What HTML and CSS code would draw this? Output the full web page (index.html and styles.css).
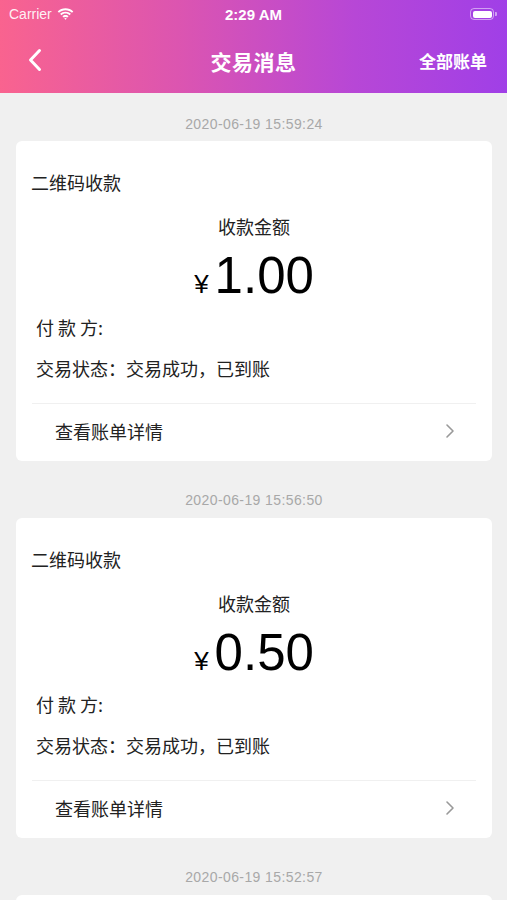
FILE: index.html
```html
<!DOCTYPE html>
<html lang="zh">
<head>
<meta charset="utf-8">
<link rel="stylesheet" href="styles.css">
</head>
<body>
<header class="header">
  <div class="status-bar">
    <div class="carrier">Carrier
      <svg class="wifi" width="17" height="12" viewBox="0 0 17 12"><path d="M8.5 2.2c2.5 0 4.8 1 6.5 2.6l1.3-1.4C14.2 1.4 11.5.3 8.5.3S2.8 1.4.7 3.4L2 4.8c1.7-1.6 4-2.6 6.5-2.6z" fill="#fff"/><path d="M8.5 5.6c1.6 0 3 .6 4.1 1.6l1.3-1.4C12.5 4.5 10.6 3.7 8.5 3.7S4.5 4.5 3.1 5.8l1.3 1.4c1.1-1 2.5-1.6 4.1-1.6z" fill="#fff"/><path d="M8.5 8.9c.7 0 1.3.3 1.8.7l1.3-1.4c-.8-.7-1.900-1.2-3.1-1.2s-2.3.5-3.1 1.2l1.3 1.4c.5-.4 1.1-.7 1.8-.7zM8.5 11.8l1.3-1.4c-.3-.3-.8-.5-1.3-.5s-1 .2-1.3.5z" fill="#fff"/></svg>
    </div>
    <div class="time">2:29 AM</div>
    <div class="battery"><span class="battery-body"><span class="battery-fill"></span></span><span class="battery-tip"></span></div>
  </div>
  <div class="nav">
    <svg class="back" width="14" height="24" viewBox="0 0 14 24"><path d="M11.5 2.5 2.5 12l9 9.5" fill="none" stroke="#fff" stroke-width="3" stroke-linecap="round" stroke-linejoin="round"/></svg>
    <div class="title">交易消息</div>
    <div class="nav-right">全部账单</div>
  </div>
</header>
<main class="list">
  <section class="entry">
    <div class="stamp">2020-06-19 15:59:24</div>
    <div class="card">
      <div class="card-type">二维码收款</div>
      <div class="amount-label">收款金额</div>
      <div class="amount"><span class="yen">¥</span><span class="num">1.00</span></div>
      <div class="field payer">付 款 方:</div>
      <div class="field status">交易状态：交易成功，已到账</div>
      <div class="detail"><span>查看账单详情</span>
        <svg class="chev" width="10" height="16" viewBox="0 0 10 16"><path d="M2 2l6 6-6 6" fill="none" stroke="#999" stroke-width="1.6" stroke-linecap="round" stroke-linejoin="round"/></svg>
      </div>
    </div>
  </section>
  <section class="entry">
    <div class="stamp">2020-06-19 15:56:50</div>
    <div class="card">
      <div class="card-type">二维码收款</div>
      <div class="amount-label">收款金额</div>
      <div class="amount"><span class="yen">¥</span><span class="num">0.50</span></div>
      <div class="field payer">付 款 方:</div>
      <div class="field status">交易状态：交易成功，已到账</div>
      <div class="detail"><span>查看账单详情</span>
        <svg class="chev" width="10" height="16" viewBox="0 0 10 16"><path d="M2 2l6 6-6 6" fill="none" stroke="#999" stroke-width="1.6" stroke-linecap="round" stroke-linejoin="round"/></svg>
      </div>
    </div>
  </section>
  <section class="entry">
    <div class="stamp">2020-06-19 15:52:57</div>
    <div class="card card-peek"></div>
  </section>
</main>
</body>
</html>
```

FILE: styles.css
```css
* { box-sizing: border-box; }
html, body { margin: 0; padding: 0; }
body {
  width: 507px;
  height: 900px;
  overflow: hidden;
  background: #f0f0f0;
  font-family: "Noto Sans CJK SC", "Noto Sans", sans-serif;
  color: #222;
}
.header {
  height: 93px;
  background: linear-gradient(90deg, #f9638f 0%, #dc55b0 35%, #b747d6 70%, #a03fe7 100%);
  color: #fff;
}
.status-bar {
  height: 28px;
  display: flex;
  align-items: center;
  justify-content: space-between;
  padding: 0 9px 0 9px;
  position: relative;
}
.carrier {
  display: flex;
  align-items: center;
  gap: 5px;
  font-family: "Liberation Sans", sans-serif;
  font-size: 14px;
  color: rgba(255,255,255,0.92);
}
.time {
  font-family: "Liberation Sans", sans-serif;
  font-weight: bold;
  font-size: 15px;
  position: absolute;
  left: 0; right: 0;
  text-align: center;
}
.battery { display: flex; align-items: center; margin-right: 1px; }
.battery-body {
  width: 24px; height: 12px;
  border: 1px solid rgba(255,255,255,0.5);
  border-radius: 4px;
  padding: 1.5px;
  display: flex;
}
.battery-fill { flex: 1; background: #fff; border-radius: 2px; }
.battery-tip { width: 2px; height: 4px; background: rgba(255,255,255,0.5); border-radius: 0 1px 1px 0; margin-left: 1px; }
.nav {
  height: 65px;
  display: flex;
  align-items: center;
  justify-content: space-between;
  padding: 0 20px 0 28px;
  position: relative;
}
.back { display: block; margin-bottom: 2px; }
.title {
  position: absolute;
  left: 0; right: 0;
  text-align: center;
  font-size: 21px;
  font-weight: bold;
  letter-spacing: 0.5px;
}
.nav-right { font-size: 17px; font-weight: bold; }
.list { padding: 0 15px 0 16px; }
.stamp {
  text-align: center;
  font-family: "Liberation Sans", sans-serif;
  font-size: 14px;
  letter-spacing: 0.4px;
  color: #a8a8a8;
  height: 48px;
  line-height: 16px;
  padding-top: 23px;
}
.entry + .entry .stamp { height: 57px; padding-top: 31px; }
.card {
  background: #fff;
  border-radius: 6px;
  padding-top: 28px;
}
.card-peek { height: 60px; }
.card-type {
  padding-left: 15px;
  font-size: 18px;
  line-height: 26px;
}
.amount-label {
  margin-top: 18px;
  text-align: center;
  font-size: 18px;
  line-height: 26px;
}
.amount {
  margin-top: 12px;
  height: 50px;
  display: flex;
  justify-content: center;
  align-items: baseline;
  color: #000;
  font-family: "Liberation Sans", sans-serif;
}
.yen { font-size: 26px; margin-right: 6px; }
.num { font-size: 51px; line-height: 50px; }
.field {
  padding-left: 20px;
  font-size: 18px;
  line-height: 26px;
}
.payer { margin-top: 13px; }
.status { margin-top: 15px; }
.detail {
  margin: 22px 16px 0;
  border-top: 1px solid #f0f0f0;
  height: 58px;
  display: flex;
  align-items: center;
  justify-content: space-between;
  padding: 0 21px 4px 23px;
  font-size: 18px;
}
.chev { display: block; }
```
